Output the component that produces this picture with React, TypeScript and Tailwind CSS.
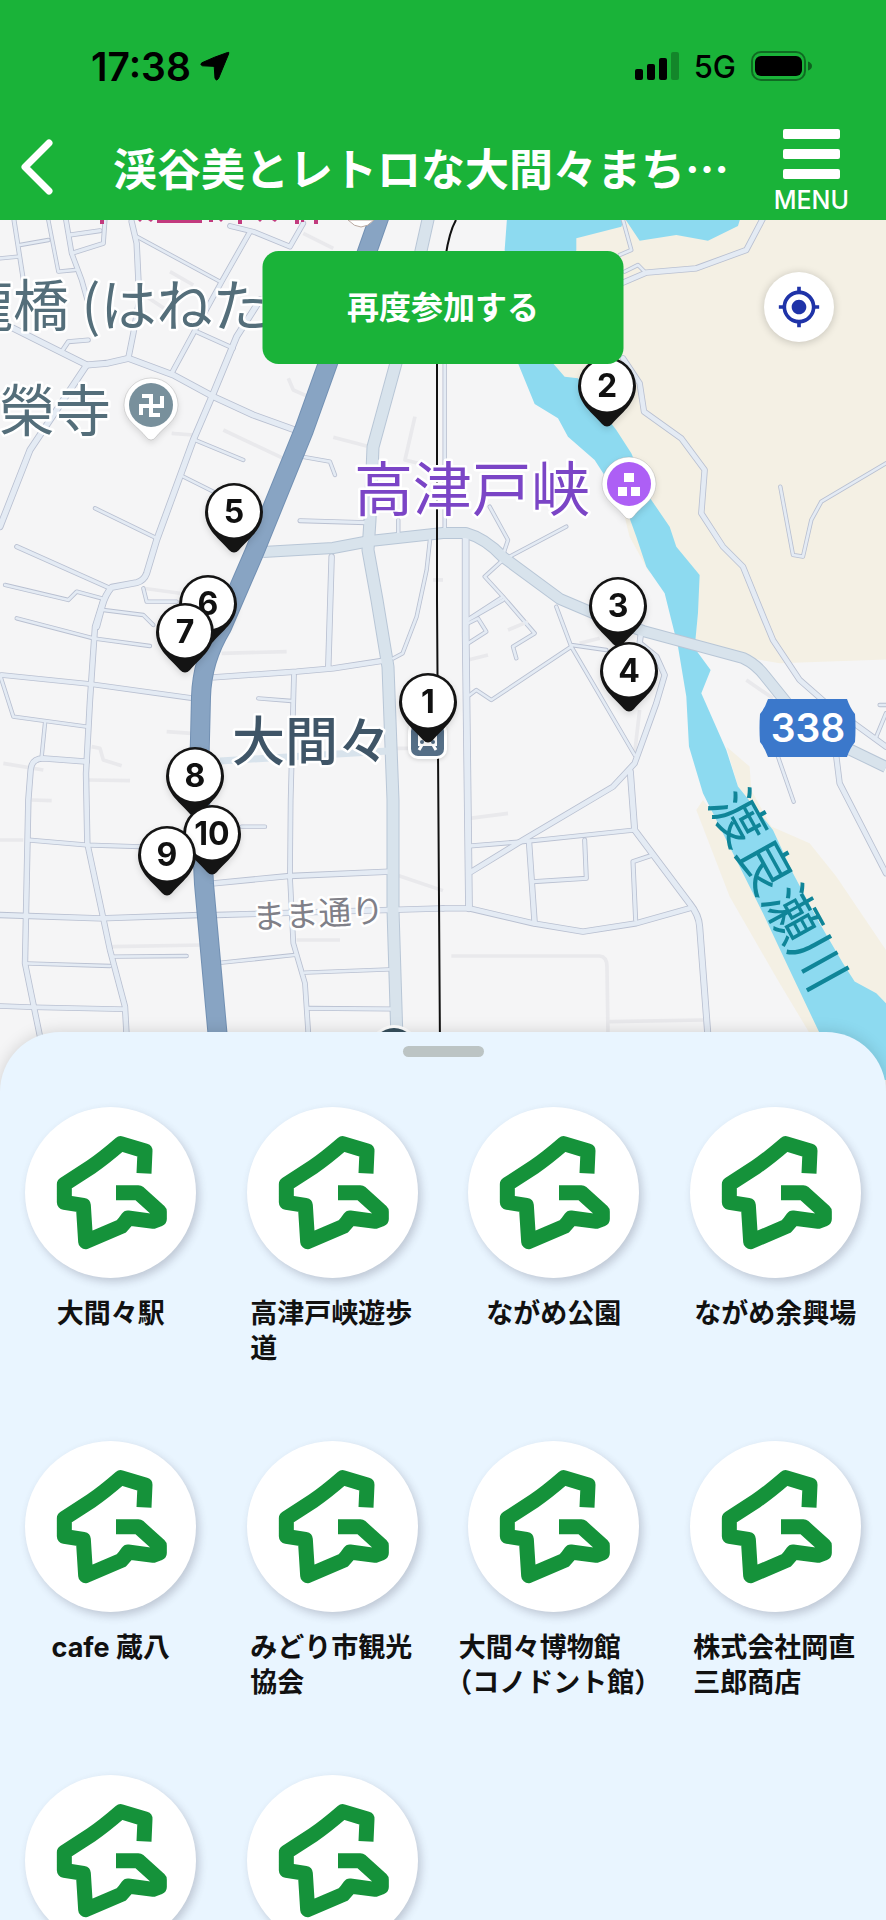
import React from 'react';
import { MdMyLocation } from 'react-icons/md';

interface Road {
  d: string;
  w: number;
}

interface Tile {
  x: number;
  y: number;
  roads: Road[];
  faint: string[];
}

interface Pin {
  no: number;
  x: number;
  y: number;
}

interface Spot {
  id: number;
  name?: string;
  wide?: boolean;
}

// Each tile is drawn at 3x resolution, offset from the top left of the map
const TILES: Tile[] = [
  {
    x: 0,
    y: -20,
    roads: [
      { w: 14, d: 'M42 60L70 240' },
      { w: 12, d: 'M0 175L55 170M60 135L145 120M145 60L175 215L225 210' },
      { w: 16, d: 'M198 60L215 160L245 240L262 300' },
      { w: 14, d: 'M215 160L310 130L315 60M210 105L300 92' },
      { w: 18, d: 'M395 65L410 130L418 300L400 400L385 475' },
      { w: 12, d: 'M405 107L660 245' },
      { w: 16, d: 'M750 95L665 245L580 400L515 520' },
      { w: 16, d: 'M690 78L760 95L870 140L910 70' },
      { w: 20, d: 'M780 300L710 410L640 580L580 720L470 1020L440 1120Q432 1142 410 1148L335 1162Q315 1185 306 1220L290 1280' },
      { w: 14, d: 'M590 395L700 445' },
      { w: 20, d: 'M30 380L180 455L260 495L320 490L385 475L520 525L640 590L760 645L885 690' },
      { w: 14, d: 'M185 455L205 425L265 420' },
      { w: 20, d: 'M260 495L210 570L150 660L90 750L0 980' },
      { w: 12, d: 'M585 720L730 780M550 830L640 875M285 925L470 1015' },
      { w: 14, d: 'M50 1040L330 1165' },
      { w: 12, d: 'M15 1155L205 1200L230 1175L305 1195M430 1165L440 1205L530 1205' },
      { w: 12, d: 'M905 770L990 785L1005 825M1195 960L1195 1010' },
      { w: 14, d: 'M900 962L1100 968' },
    ],
    faint: [
      'M510 215L580 255M670 690L850 775M865 535L880 570L925 590',
      'M1000 712L1100 738M1245 650L1215 780L1255 790M515 700L580 705M910 100L1000 145',
      'M430 1165L540 1180M440 290L500 330',
    ],
  },
  {
    x: 443,
    y: -20,
    roads: [
      { w: 12, d: 'M5 490L5 990' },
      { w: 12, d: 'M200 1070L370 980M140 920L195 1020L180 1065' },
      { w: 12, d: 'M180 1080L125 1130L180 1190L75 1258M180 1190L275 1300L210 1340L220 1375' },
      { w: 18, d: 'M960 55L910 150L760 205L610 218L540 248' },
      { w: 12, d: 'M540 60L565 150L530 165M545 215L585 195L605 215' },
      { w: 18, d: 'M540 475L590 550L603 635L715 715L785 810L775 940L840 1040L900 1100L965 1260L990 1320L1070 1440L1150 1510L1329 1640' },
      { w: 12, d: 'M1012 860L1050 1065L1080 1070L1105 960L1135 905L1329 790' },
    ],
    faint: ['M0 1140L-30 1140'],
  },
  {
    x: 0,
    y: 380,
    roads: [
      { w: 16, d: 'M5 225L270 252L580 295' },
      { w: 12, d: 'M0 225L40 350L260 380M135 370L125 470' },
      { w: 18, d: 'M310 0L285 80L270 300L258 520L262 730L330 1050L375 1220L385 1400' },
      { w: 12, d: 'M50 55L280 115L450 138M310 30L430 45L460 75' },
      { w: 18, d: 'M260 485L130 475Q95 475 92 510L85 600L75 1090L120 1310' },
      { w: 14, d: 'M85 720L260 735L420 740' },
      { w: 18, d: 'M0 945L300 955L600 945M650 945L1329 925' },
      { w: 12, d: 'M75 1090L330 1098M340 1070L560 1068' },
      { w: 16, d: 'M0 1218L100 1222L375 1228' },
      { w: 18, d: 'M640 232L890 215L1000 205L1165 180' },
      { w: 18, d: 'M995 -130L985 200' },
      { w: 12, d: 'M1290 -180L1280 -90L1250 50L1208 160L1180 175' },
      { w: 16, d: 'M882 225L872 600L870 830L880 1030L915 1150L925 1300' },
      { w: 12, d: 'M775 295L875 303M665 1088L885 1065M915 1118L1170 1108M725 680L795 680' },
      { w: 18, d: 'M640 850L870 828L1170 815' },
      { w: 14, d: 'M925 1225L1175 1227' },
    ],
    faint: [
      'M665 160L860 155M500 395L575 400M10 490L130 510M265 540L390 542M95 600L155 602',
      'M1190 825L1329 872M890 1020L1020 1020M275 440L300 445L310 480L365 497',
      'M335 1040L610 1035M0 720L70 720M1190 445L1230 445',
    ],
  },
  {
    x: 443,
    y: 380,
    roads: [
      { w: 22, d: 'M68 -190L68 100L78 925' },
      { w: 12, d: 'M75 60L180 0M75 70L105 55L130 95L75 130' },
      { w: 12, d: 'M340 20L385 140L575 465M385 140L145 300L100 270L80 285M385 135L490 150' },
      { w: 18, d: 'M595 90L590 130L640 170L665 225L640 310L575 490L510 560L240 720L85 815' },
      { w: 20, d: 'M562 515L575 690L740 910Q768 945 770 980L795 1310' },
      { w: 14, d: 'M80 738L240 725L575 690M425 720L430 835L270 845M630 765L570 785L578 960' },
      { w: 18, d: 'M258 725L275 970' },
      { w: 18, d: 'M0 925L78 925L270 970L420 995L580 970L740 925' },
      { w: 12, d: 'M1005 470L1052 605M1310 315L1329 315M1329 340L1300 410' },
      { w: 18, d: 'M1180 470L1190 550L1329 820' },
    ],
    faint: [
      'M25 1068L470 1068Q492 1070 492 1100L495 1300M500 1265L780 1260',
      'M80 655L195 640M75 180L135 165M195 90L255 65M910 240L990 295M590 330L575 460M410 130L470 115',
    ],
  },
];

const PINS: Pin[] = [
  { no: 1, x: 399, y: 453 },
  { no: 2, x: 578, y: 137 },
  { no: 3, x: 589, y: 357 },
  { no: 4, x: 600, y: 422 },
  { no: 5, x: 205, y: 263 },
  { no: 6, x: 179, y: 355 },
  { no: 7, x: 156, y: 383 },
  { no: 8, x: 166, y: 527 },
  { no: 10, x: 183, y: 585 },
  { no: 9, x: 138, y: 606 },
];

const SPOTS: Spot[] = [
  { id: 1, name: '大間々駅' },
  { id: 2, name: '高津戸峡遊歩道' },
  { id: 3, name: 'ながめ公園' },
  { id: 4, name: 'ながめ余興場' },
  { id: 5, name: 'cafe 蔵八' },
  { id: 6, name: 'みどり市観光協会' },
  { id: 7, name: '大間々博物館（コノドント館）', wide: true },
  { id: 8, name: '株式会社岡直三郎商店' },
  { id: 9 },
  { id: 10 },
];

const StatusBar: React.FC = () => (
  <div className="flex h-[100px] items-center justify-between pt-8 pr-[74px] pl-[91px] text-black">
    <div className="flex items-center gap-[9px]">
      <span className="text-[39px] leading-none font-semibold">17:38</span>
      <svg width="30" height="30" viewBox="0 0 30 30" aria-hidden="true">
        <path
          d="M27.500 1.500Q29.500 .5 28.600 3L18.500 27.500Q16.500 30.500 15 27.500L14.300 16.500Q14 15.400 13 15.300L2.500 14.800Q-.5 13.800 1.800 11.800Q14 6 27.500 1.500Z"
          stroke="#000"
        />
      </svg>
    </div>
    <div className="flex items-center gap-[15px]">
      <svg width="44" height="28" viewBox="0 0 44 28" aria-hidden="true">
        <rect x="0" y="17" width="8" height="11" rx="2" />
        <rect x="12" y="12" width="8" height="16" rx="2" />
        <rect x="24" y="6" width="8" height="22" rx="2" />
        <rect x="36" y="0" width="8" height="28" rx="2" opacity=".25" />
      </svg>
      <span className="text-[31px] leading-none font-medium">5G</span>
      <svg width="61" height="30" viewBox="0 0 61 30" aria-hidden="true">
        <rect x="1" y="1" width="53" height="28" rx="9" fill="none" stroke="#000" strokeWidth="2" opacity=".4" />
        <rect x="4" y="5" width="47" height="20" rx="6" />
        <path d="M57 10.500Q61 12 61 15T57 19.500Z" opacity=".45" />
      </svg>
    </div>
  </div>
);

const Header: React.FC = () => (
  <header className="shrink-0 bg-[#1ab339] text-white">
    <StatusBar />
    <div className="flex h-[120px] items-center pt-[14px] pr-[37px]">
      <button type="button" aria-label="戻る" className="flex w-[113px] shrink-0 pl-[18px]">
        <svg width="38" height="58" viewBox="0 0 38 58" fill="none" stroke="currentColor" strokeWidth="7" strokeLinecap="round" strokeLinejoin="round">
          <path d="M31 5L7 29L31 53" />
        </svg>
      </button>
      <h1 className="min-w-0 flex-1 truncate font-['Noto_Sans_CJK_JP',sans-serif] text-[44px] leading-[60px] font-bold">
        渓谷美とレトロな大間々まち…
      </h1>
      <button type="button" className="flex shrink-0 flex-col items-center gap-[8px] pt-[8px]">
        <span className="flex flex-col gap-[10px]">
          <span className="h-[10px] w-[57px] rounded-xs bg-white" />
          <span className="h-[10px] w-[57px] rounded-xs bg-white" />
          <span className="h-[10px] w-[57px] rounded-xs bg-white" />
        </span>
        <span className="text-[25px] leading-[26px] font-medium">MENU</span>
      </button>
    </div>
  </header>
);

const MapDrawing: React.FC = () => (
  <svg className="absolute inset-0 h-full w-full" viewBox="0 0 886 872" preserveAspectRatio="xMidYMin slice" aria-hidden="true">
    <rect width="886" height="872" fill="#f5f5f6" />

    {/* Open land and the river */}
    <g transform="translate(443 -20) scale(.3333)">
      <g fill="#f4f0e4">
        <path d="M330 60H1400V1376L1010 1390L755 1345L765 1240L560 760L300 500Z" />
        <path d="M780 1800L760 1830L860 2090L1010 2350L1100 2500H1200L900 1960Z" />
        <path d="M850 1640L920 1700L925 1770L985 1880L1100 1930L1180 2030L1329 2250V2420H1250L885 1760Z" />
        <path d="M520 850L560 1010L620 1120L600 950Z" />
      </g>
      <path
        fill="#8ddaf0"
        d="M192 55L185 150L225 490L275 612L345 655L375 710L455 780L500 850L540 900L580 1010L610 1100L665 1180L685 1260L705 1340L730 1490L738 1640L780 1780L880 1980L960 2140L1040 2310L1130 2500L1180 2640H1400V2460L1329 2410L1300 2380L1235 2345L1200 2290L1130 2170L1050 2020L990 1890L885 1760L850 1650L775 1480L803 1410L755 1345L765 1240L770 1125L700 1040L680 980L625 900L565 760L520 690L450 600L405 535L365 530L330 490L400 150L400 115L535 80L545 55Z"
      />
      <path fill="#8ddaf0" d="M545 55L590 122L700 105L795 122L885 78L892 55Z" />
    </g>

    {/* Minor roads: casing first, then the surface on top */}
    {TILES.map((tile) => (
      <g key={`${tile.x}${tile.y}`} transform={`translate(${tile.x} ${tile.y}) scale(.3333)`} fill="none">
        {tile.faint.map((d) => (
          <path key={d} d={d} stroke="#e9e9ec" strokeWidth="11" strokeLinejoin="round" />
        ))}
        {tile.roads.map((r) => (
          <path key={r.d} d={r.d} stroke="#b9c0d1" strokeWidth={r.w + 1} strokeLinejoin="round" strokeLinecap="round" />
        ))}
      </g>
    ))}
    <g fill="none" stroke="#b8c6d6" strokeLinejoin="round">
      <path strokeWidth="13" d="M429 -5L396 143L373 227L370 300L368 330L377 380L388 447L393 580V690L397 820" />
      <path strokeWidth="12" d="M263 332L333 328L370 321L443 313H466Q485 318 503 337L560 379L593 393L643 411L743 438Q756 444 765 456L790 487L830 520L886 547" />
    </g>
    {TILES.map((tile) => (
      <g key={`${tile.x}${tile.y}`} transform={`translate(${tile.x} ${tile.y}) scale(.3333)`} fill="none" stroke="#e4ebf4">
        {tile.roads.map((r) => (
          <path key={r.d} d={r.d} strokeWidth={r.w - 4} strokeLinejoin="round" strokeLinecap="round" />
        ))}
      </g>
    ))}
    <g fill="none" stroke="#d8e3ec" strokeLinejoin="round">
      <path strokeWidth="11" d="M429 -5L396 143L373 227L370 300L368 330L377 380L388 447L393 580V690L397 820" />
      <path strokeWidth="10" d="M263 332L333 328L370 321L443 313H466Q485 318 503 337L560 379L593 393L643 411L743 438Q756 444 765 456L790 487L830 520L886 547" />
      <path strokeWidth="7" d="M220 541L388 531" />
    </g>

    {/* Main road */}
    <g fill="none" strokeLinejoin="round">
      <path stroke="#7290b3" strokeWidth="20" d="M380 -5L328 143L304 210L254 333L222 407Q202 440 201 477L199 560L204 664L219 830" />
      <path stroke="#88a4c3" strokeWidth="18" d="M380 -5L328 143L304 210L254 333L222 407Q202 440 201 477L199 560L204 664L219 830" />
      <path stroke="#111" strokeWidth="2" d="M456 0Q449 12 445 40L437 80V380L440 830" />
    </g>

    {/* Place names */}
    <g className="font-normal" fontFamily="'Noto Sans CJK JP', sans-serif" paintOrder="stroke" stroke="#fff" strokeWidth="5" strokeLinejoin="round">
      <text x="-43" y="106" fontSize="56" fill="#546e7a">瀧橋 (はねた</text>
      <text x="-1" y="211" fontSize="56" fill="#546e7a">榮寺</text>
      <text x="354" y="291" fontSize="59" fill="#7b45c6">高津戸峡</text>
      <text x="232" y="541" fontSize="53" fill="#3f5567" fontWeight="500">大間々</text>
      <text x="253" y="709" fontSize="33" fill="#808088" transform="rotate(-3 253 709)">まま通り</text>
    </g>
    <text x="708" y="583" fontSize="55" fill="#0f8598" fontFamily="'Noto Sans CJK JP', sans-serif" transform="rotate(61 708 583)">渡良瀬川</text>

    {/* Lower edge of a label that runs under the header */}
    <g fill="#c23a7e">
      <path d="M100 0H104V4H100ZM138 0H142L140 2ZM148 0H153L151 2ZM157 0H202V3H157ZM209 0H213V2H209ZM219 0H223L221 2ZM238 0H242V4H238ZM258 0H262L260 2ZM272 0H277L275 2ZM295 0H299V4H295ZM301 0H304V2H301ZM314 0H318V4H314Z" />
    </g>
    <path d="M348 0Q361 14 374 0Z" fill="#fff" stroke="#b9a9a0" />

    {/* Temple */}
    <g transform="translate(151 185)">
      <g className="drop-shadow-md">
        <path d="M0 -27A27 27 0 0 1 27 0C27 16 12 22 5 32Q0 38 -5 32C-12 22 -27 16 -27 0A27 27 0 0 1 0 -27Z" fill="#fff" stroke="#999" strokeOpacity=".35" />
      </g>
      <circle r="22" fill="#78909c" />
      <path d="M-9 -9H0V10H9M-10 10V1H11V-9" fill="none" stroke="#fff" strokeWidth="4" />
    </g>

    {/* Sightseeing spot */}
    <g transform="translate(629 264)">
      <g className="drop-shadow-md">
        <path d="M0 -27A27 27 0 0 1 27 0C27 16 12 22 5 32Q0 38 -5 32C-12 22 -27 16 -27 0A27 27 0 0 1 0 -27Z" fill="#fff" stroke="#999" strokeOpacity=".35" />
      </g>
      <circle r="22" fill="#ad5ff5" />
      <path d="M-5 -11H5V-2H-5ZM-11 3H-2V12H-11ZM2 3H11V12H2Z" fill="#fff" />
    </g>

    {/* Station */}
    <g transform="translate(408 501)">
      <rect className="drop-shadow-sm" width="39" height="38" rx="10" fill="#fff" />
      <rect x="3" y="3" width="33" height="32" rx="7" fill="#546e86" />
      <path d="M10 8H29V25H10Z" fill="#fff" />
      <path d="M14 24L11 29M25 24L28 29" stroke="#fff" strokeWidth="3" />
      <circle cx="14" cy="21" r="2" fill="#546e86" />
      <circle cx="25" cy="21" r="2" fill="#546e86" />
    </g>
    <circle cx="394" cy="830" r="25" fill="#fff" />
    <circle cx="394" cy="830" r="22" fill="#37505e" />

    {/* Route shield */}
    <path d="M768 479H847Q850 488 855 494Q856 508 855 522Q850 528 847 537H768Q765 528 760 522Q759 508 760 494Q765 488 768 479Z" fill="#3b78cb" />
    <text x="808" y="522" fontSize="39" fontWeight="600" fill="#fff" textAnchor="middle" fontFamily="Inter, sans-serif">338</text>
  </svg>
);

const MapPin: React.FC<{ pin: Pin }> = ({ pin }) => (
  <button
    type="button"
    className="absolute h-[70px] w-[58px] drop-shadow-md"
    style={{ left: `calc(50% + ${pin.x - 443}px)`, top: pin.y }}
  >
    <svg className="absolute inset-0" width="58" height="70" viewBox="0 0 58 70" aria-hidden="true">
      <path d="M29 0A29 29 0 0 1 58 29C58 47 43 56 34 67Q29 72 24 67C15 56 0 47 0 29A29 29 0 0 1 29 0Z" fill="#141414" />
      <circle cx="29" cy="28.500" r="26" fill="#fff" />
    </svg>
    <span className="relative flex h-full justify-center pt-[13px] text-[32px] leading-[32px] font-bold text-[#111]">{pin.no}</span>
  </button>
);

const SpotLogo: React.FC = () => (
  <svg className="h-full w-full" viewBox="75 80 513 513" fill="none" stroke="#15923a" strokeWidth="45" strokeLinejoin="round" aria-hidden="true">
    <path d="M432 279L435 212L362 190Q310 235 273 260L193 312V366L250 375L257 484L364 438Q374 428 384 413L460 423L478 416V394L415 337H348" />
  </svg>
);

const SpotCard: React.FC<{ spot: Spot }> = ({ spot }) => (
  <li>
    <button type="button" className="flex w-full flex-col items-center gap-[18px]">
      <span className="h-[171px] w-[171px] rounded-full bg-white shadow-[3px_4px_8px_rgba(60,60,80,0.24)]">
        <SpotLogo />
      </span>
      {spot.name && (
        <span
          className={`text-left text-[27px] leading-[35px] font-bold text-[#111] [text-spacing-trim:trim-start] ${
            spot.wide ? 'w-[190px]' : 'max-w-[164px]'
          }`}
        >
          {spot.name}
        </span>
      )}
    </button>
  </li>
);

const App: React.FC = () => {
  return (
    <div lang="ja" className="flex h-screen flex-col overflow-hidden bg-[#e9f5ff] font-[Inter,'Noto_Sans_CJK_JP',sans-serif]">
      <Header />

      <main className="flex min-h-0 flex-1 flex-col">
        <section className="relative h-[872px] shrink-0 overflow-hidden">
          <MapDrawing />
          {PINS.map((pin) => (
            <MapPin key={pin.no} pin={pin} />
          ))}
          <button
            type="button"
            className="absolute top-[31px] left-1/2 h-[113px] w-[361px] -translate-x-1/2 rounded-2xl bg-[#1ab339] text-[32px] font-bold text-white"
          >
            再度参加する
          </button>
          <button
            type="button"
            aria-label="現在地"
            className="absolute top-[52px] right-[52px] flex h-[70px] w-[70px] items-center justify-center rounded-full bg-white text-[#1f33a8] shadow-[0_1px_8px_rgba(0,0,0,0.2)]"
          >
            <MdMyLocation size={44} />
          </button>
        </section>

        <section className="relative -mt-[60px] flex-1 rounded-t-[60px] bg-[#e9f5ff] pt-[14px] shadow-[0_0_16px_rgba(0,0,0,0.15)]">
          <div className="mx-auto h-[11px] w-[81px] rounded-full bg-[#bcc4c4]" />
          <ul className="mt-[50px] grid grid-cols-4 gap-y-[75px]">
            {SPOTS.map((spot) => (
              <SpotCard key={spot.id} spot={spot} />
            ))}
          </ul>
        </section>
      </main>
    </div>
  );
};

export default App;
